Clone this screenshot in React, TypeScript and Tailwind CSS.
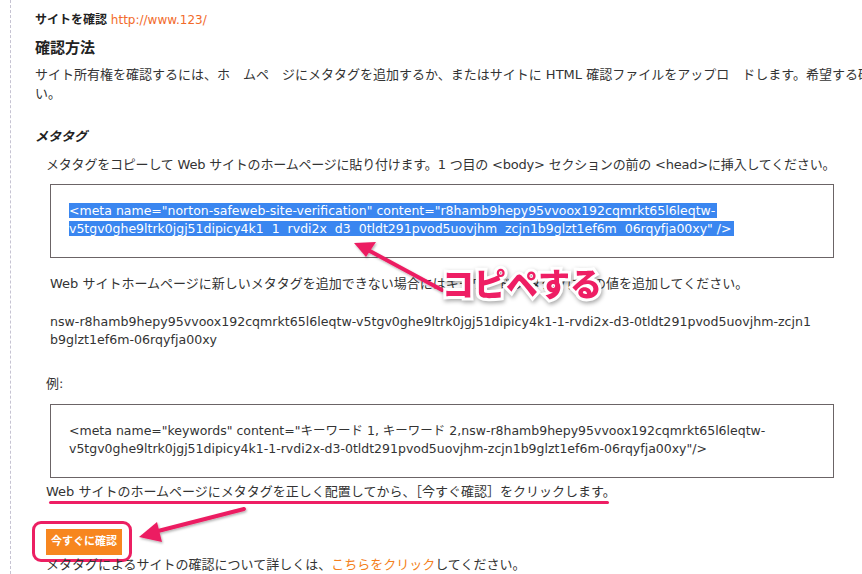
import React from 'react';

const font = "font-['DejaVu_Sans','Noto_Sans_CJK_JP',sans-serif]";

function CodeBox({ lines, selected }: { lines: string[]; selected?: boolean }) {
  return (
    <div className="ml-[4px] w-[784px] h-[74px] border border-[#6b6466] pl-[18px] pt-[17px] text-[12.5px] leading-[18px]">
      {lines.map((l, i) => (
        <div key={i} className="whitespace-pre">
          <span className={selected ? 'bg-[#3a86f0] text-white pr-[2px]' : 'text-[#333]'}>{l}</span>
        </div>
      ))}
    </div>
  );
}

export default function App() {
  return (
    <div className={`relative w-[862px] h-[574px] overflow-hidden bg-white text-[#333] ${font}`}>
      <div className="flex h-full pl-[2px]">
        <div className="w-[2px] h-full bg-[#cdd2cd]" />
        <div className="ml-[8px] h-full border-l border-dashed border-[#c6c3d2]" />

        <div className="flex-1 pl-[24px] text-[13px]">
          {/* header */}
          <div className="pt-[12px] leading-[16px] text-[12px]">
            <span className="font-bold text-[#222]">サイトを確認</span>{' '}
            <span className="text-[#f26a2a]">http://www.123/</span>
          </div>
          <h2 className="mt-[10px] text-[15px] font-bold leading-[20px] text-[#222]">確認方法</h2>
          <div className="mt-[7px] leading-[19px] w-[840px] overflow-hidden">
            <div className="whitespace-nowrap">
              サイト所有権を確認するには、ホ　ムペ　ジにメタタグを追加するか、またはサイトに HTML 確認ファイルをアップロ　ドします。希望する確認方法を選択してください。
            </div>
            <div>い。</div>
          </div>

          {/* meta tag section */}
          <h3 className="mt-[25px] text-[13px] font-bold italic leading-[18px] text-[#222]">メタタグ</h3>
          <div className="ml-[11px] mt-[10px] leading-[18px] whitespace-nowrap tracking-[-0.2px]">
            メタタグをコピーして Web サイトのホームページに貼り付けます。1 つ目の &lt;body&gt; セクションの前の &lt;head&gt;に挿入してください。
          </div>
          <div className="ml-[11px] mt-[10px]">
            <CodeBox
              selected
              lines={[
                '<meta name="norton-safeweb-site-verification" content="r8hamb9hepy95vvoox192cqmrkt65l6leqtw-',
                'v5tgv0ghe9ltrk0jgj51dipicy4k1  1  rvdi2x  d3  0tldt291pvod5uovjhm  zcjn1b9glzt1ef6m  06rqyfja00xy" />',
              ]}
            />
          </div>

          <div className="ml-[15px] mt-[17px] leading-[18px] whitespace-nowrap">
            Web サイトホームページに新しいメタタグを追加できない場合にはキーワード メタタグに次の値を追加してください。
          </div>
          <div className="ml-[15px] mt-[20px] text-[12.6px] leading-[18px] whitespace-nowrap">
            <div>nsw-r8hamb9hepy95vvoox192cqmrkt65l6leqtw-v5tgv0ghe9ltrk0jgj51dipicy4k1-1-rvdi2x-d3-0tldt291pvod5uovjhm-zcjn1</div>
            <div>b9glzt1ef6m-06rqyfja00xy</div>
          </div>

          <div className="ml-[11px] mt-[26px] leading-[18px]">例:</div>
          <div className="ml-[11px] mt-[11px]">
            <CodeBox
              lines={[
                '<meta name="keywords" content="キーワード 1, キーワード 2,nsw-r8hamb9hepy95vvoox192cqmrkt65l6leqtw-',
                'v5tgv0ghe9ltrk0jgj51dipicy4k1-1-rvdi2x-d3-0tldt291pvod5uovjhm-zcjn1b9glzt1ef6m-06rqyfja00xy"/>',
              ]}
            />
          </div>

          <div className="ml-[11px] mt-[5px] leading-[18px] whitespace-nowrap">
            Web サイトのホームページにメタタグを正しく配置してから、［今すぐ確認］をクリックします。
          </div>
          <div className="ml-[14px] mt-[0px] w-[560px] h-[3px] bg-[#ee1e64] rounded-full" />

          <div className="mt-[17px] ml-[-3px] w-[100px] h-[41px] rounded-[9px] border-[3px] border-[#ec1f62] pl-[11px] pt-[5px]">
            <button className="w-[76px] h-[26px] bg-[#f7861f] text-white text-[11px] font-bold leading-[26px] text-center">
              今すぐに確認
            </button>
          </div>
          <div className="ml-[11px] mt-[-6px] leading-[18px] whitespace-nowrap">
            メタタグによるサイトの確認について詳しくは、<span className="text-[#f47f20]">こちらをクリック</span>してください。
          </div>
        </div>
      </div>

      {/* annotations */}
      <svg className="absolute left-0 top-0 pointer-events-none" width="862" height="574">
        <defs>
          <filter id="sh" x="-20%" y="-20%" width="140%" height="140%">
            <feDropShadow dx="1" dy="1.5" stdDeviation="1" floodColor="#000" floodOpacity="0.3" />
          </filter>
        </defs>
        <g fill="#ec1f62" stroke="#ec1f62" filter="url(#sh)">
          <line x1="442" y1="290" x2="368" y2="250" strokeWidth="4" strokeLinecap="round" />
          <polygon points="354,243 376,242 366,257" stroke="none" />
          <line x1="244" y1="509" x2="158" y2="531" strokeWidth="4" strokeLinecap="round" />
          <polygon points="139,537 157,522 162,542" stroke="none" />
        </g>
      </svg>
      <div
        className="absolute left-[442px] top-[260px] text-[32px] font-black leading-[44px] text-[#ee1e64] font-['Noto_Sans_CJK_JP',sans-serif] [-webkit-text-stroke:6px_white] [paint-order:stroke_fill] [filter:drop-shadow(1px_2px_2px_rgba(0,0,0,0.35))]"
      >
        コピペする
      </div>
    </div>
  );
}
